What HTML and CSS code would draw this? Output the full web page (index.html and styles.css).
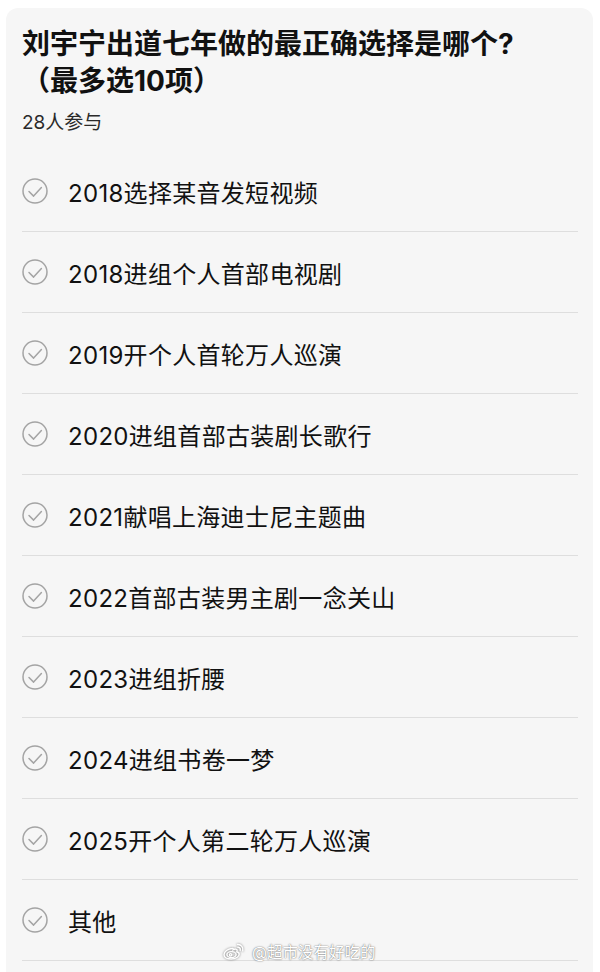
FILE: index.html
```html
<!DOCTYPE html>
<html lang="zh-CN">
<head>
  <meta charset="UTF-8">
  <meta name="viewport" content="width=device-width, initial-scale=1.0">
  <title>投票</title>
  <link rel="stylesheet" href="styles.css">
</head>
<body>
  <div class="card">
    <h1 class="title">刘宇宁出道七年做的最正确选择是哪个?<br>（最多选10项）</h1>
    <p class="count">28人参与</p>

    <ul class="options">
      <li class="option"><svg class="check" viewBox="0 0 26 26"><circle cx="13" cy="13" r="12" /><path d="M7 13.5l4.6 4.6 7.8-8.6" /></svg>2018选择某音发短视频</li>
      <li class="option"><svg class="check" viewBox="0 0 26 26"><circle cx="13" cy="13" r="12" /><path d="M7 13.5l4.6 4.6 7.8-8.6" /></svg>2018进组个人首部电视剧</li>
      <li class="option"><svg class="check" viewBox="0 0 26 26"><circle cx="13" cy="13" r="12" /><path d="M7 13.5l4.6 4.6 7.8-8.6" /></svg>2019开个人首轮万人巡演</li>
      <li class="option"><svg class="check" viewBox="0 0 26 26"><circle cx="13" cy="13" r="12" /><path d="M7 13.5l4.6 4.6 7.8-8.6" /></svg>2020进组首部古装剧长歌行</li>
      <li class="option"><svg class="check" viewBox="0 0 26 26"><circle cx="13" cy="13" r="12" /><path d="M7 13.5l4.6 4.6 7.8-8.6" /></svg>2021献唱上海迪士尼主题曲</li>
      <li class="option"><svg class="check" viewBox="0 0 26 26"><circle cx="13" cy="13" r="12" /><path d="M7 13.5l4.6 4.6 7.8-8.6" /></svg>2022首部古装男主剧一念关山</li>
      <li class="option"><svg class="check" viewBox="0 0 26 26"><circle cx="13" cy="13" r="12" /><path d="M7 13.5l4.6 4.6 7.8-8.6" /></svg>2023进组折腰</li>
      <li class="option"><svg class="check" viewBox="0 0 26 26"><circle cx="13" cy="13" r="12" /><path d="M7 13.5l4.6 4.6 7.8-8.6" /></svg>2024进组书卷一梦</li>
      <li class="option"><svg class="check" viewBox="0 0 26 26"><circle cx="13" cy="13" r="12" /><path d="M7 13.5l4.6 4.6 7.8-8.6" /></svg>2025开个人第二轮万人巡演</li>
      <li class="option"><svg class="check" viewBox="0 0 26 26"><circle cx="13" cy="13" r="12" /><path d="M7 13.5l4.6 4.6 7.8-8.6" /></svg>其他</li>
    </ul>
  </div>

  <div class="watermark">
    <svg class="weibo" viewBox="0 0 24 18" width="24" height="18">
      <path d="M10 6.5c-4 .3-8 3-8 6.2 0 2.6 3.3 4.3 7.2 4.3 4.6 0 8-2.4 8-4.8 0-1.6-1.5-2.3-2.4-2.5.6-1.2.5-2.4-1-2.6-1.2-.2-2.6.6-2.6.6s.6-1.4-1.2-1.2z" />
      <ellipse cx="9.5" cy="12.6" rx="4.6" ry="3" />
      <circle cx="8.6" cy="12.8" r="1.2" />
      <path d="M15.5 2.5a5 5 0 0 1 5.2 6.4M15.8 5.2a2.3 2.3 0 0 1 2.4 3" />
    </svg>
    <span>@超市没有好吃的</span>
  </div>
</body>
</html>
```

FILE: styles.css
```css
* { margin: 0; padding: 0; box-sizing: border-box; }
body {
  background: #fff;
  font-family: Inter, "Noto Sans CJK SC", sans-serif;
  color: #111;
  width: 600px; height: 972px; overflow: hidden;
  position: relative;
}
.card {
  margin: 8px 7px 0 6px;
  height: 980px;
  background: #f6f6f6;
  border-radius: 12px;
  padding: 18px 15px 0 16px;
}
.title {
  font-size: 28px; font-weight: 700; line-height: 37px;
  color: #111;
}
.count {
  margin-top: 11px;
  font-size: 19px; line-height: 24px;
  color: #2a2a2a;
}
.options { list-style: none; margin-top: 16px; }
.option {
  display: flex; align-items: center;
  height: 81px;
  border-bottom: 1px solid #dedede;
  font-size: 24px; color: #111; letter-spacing: 0.3px;
}
.check {
  width: 26px; height: 26px; margin-right: 20px; flex-shrink: 0;
  fill: none; stroke: #a4a4a4; stroke-width: 1.5;
  stroke-linecap: round; stroke-linejoin: round;
}
.watermark {
  position: absolute; left: 222px; top: 940px;
  display: flex; align-items: center; gap: 6px;
  font-size: 15.5px; color: #fff;
  text-shadow: 0 0 2px rgba(0,0,0,0.45), 0 0 1px rgba(0,0,0,0.4);
}
.weibo {
  fill: none; stroke: #fff; stroke-width: 1.4; stroke-linecap: round;
  filter: drop-shadow(0 0 1px rgba(0,0,0,0.5));
}
```
